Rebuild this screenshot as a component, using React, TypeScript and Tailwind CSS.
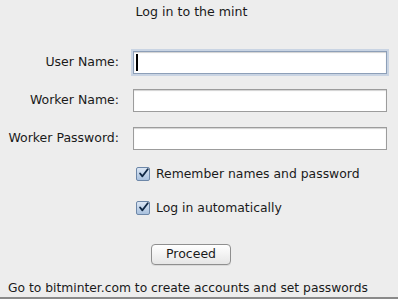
const FONT = { fontFamily: '"DejaVu Sans", "Liberation Sans", sans-serif' };

function Field({ label, focused }: { label: string; focused?: boolean }) {
  return (
    <div className="flex items-center h-[23px]">
      <label className="w-[120px] text-right text-[12.5px] text-[#1a1a1a] pr-[1px]">{label}</label>
      <div
        className={
          "ml-[13px] w-[254px] h-[23px] bg-white border flex items-center shadow-[inset_0_1px_1px_rgba(0,0,0,0.18)] " +
          (focused ? "border-[#8d9fb8] outline outline-2 outline-[#c9d4e3]" : "border-[#9c9c9c]")
        }
      >
        {focused && <span className="ml-[2px] w-[2px] h-[17px] bg-black" />}
      </div>
    </div>
  );
}

function Check({ label }: { label: string }) {
  return (
    <div className="flex items-center h-[16px] pl-[136px]">
      <span className="w-[14px] h-[14px] rounded-[2px] border border-[#6d87a8] bg-gradient-to-b from-[#dbe6f4] to-[#a9c1de] flex items-center justify-center">
        <svg width="13" height="13" viewBox="0 0 13 13" className="-mt-[2px] ml-[1px]">
          <path d="M2.5 6.5 L5.2 9.8 L11.5 1.5" fill="none" stroke="#102845" strokeWidth="2.2" strokeLinecap="round" strokeLinejoin="round" />
        </svg>
      </span>
      <span className="ml-[6px] text-[12.4px] text-[#1a1a1a]">{label}</span>
    </div>
  );
}

export default function App() {
  return (
    <div
      className="w-[398px] h-[299px] bg-[#ededed] border-b-2 border-[#8a8a8a] flex flex-col overflow-hidden"
      style={FONT}
    >
      <div className="mt-[4px] h-[16px] leading-[16px] text-center pr-[15px] text-[12.6px] text-[#1a1a1a]">
        Log in to the mint
      </div>

      <div className="mt-[31px] flex flex-col gap-[15px]">
        <Field label="User Name:" focused />
        <Field label="Worker Name:" />
        <Field label="Worker Password:" />
      </div>

      <div className="mt-[16px] flex flex-col gap-[18px]">
        <Check label="Remember names and password" />
        <Check label="Log in automatically" />
      </div>

      <div className="mt-[25px] pl-[151px]">
        <button className="w-[80px] h-[21px] rounded-[4px] border border-[#8f8f8f] bg-gradient-to-b from-white to-[#e6e6e6] text-[12.5px] text-[#1a1a1a] leading-none shadow-[0_1px_0_rgba(0,0,0,0.08)]">
          Proceed
        </button>
      </div>

      <div className="mt-[15px] pl-[8px] h-[16px] leading-[16px] text-[12.3px] text-[#1a1a1a] whitespace-nowrap">
        Go to bitminter.com to create accounts and set passwords
      </div>
    </div>
  );
}
